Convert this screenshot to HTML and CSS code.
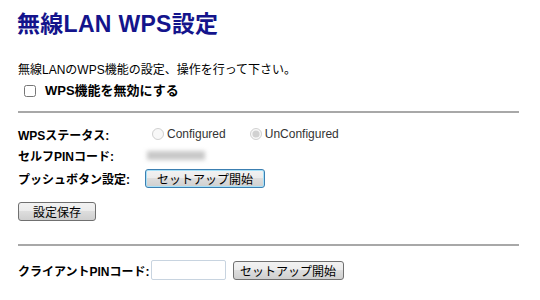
FILE: index.html
```html
<!DOCTYPE html>
<html lang="ja">

<head>
    <meta charset="UTF-8">
    <title>無線LAN WPS設定</title>
    <link rel="stylesheet" href="styles.css">
</head>

<body>
    <div class="page">
        <h1 class="title">無線LAN WPS設定</h1>
        <p class="desc">無線LANのWPS機能の設定、操作を行って下さい。</p>
        <label class="disable">
            <input type="checkbox" class="check">
            <span>WPS機能を無効にする</span>
        </label>
        <hr class="rule">
        <div class="form">
            <div class="row">
                <span class="label">WPSステータス:</span>
                <label class="radio"><input type="radio" name="status" disabled>Configured</label>
                <label class="radio"><input type="radio" name="status" checked disabled>UnConfigured</label>
            </div>
            <div class="row row-pin">
                <span class="label">セルフPINコード:</span>
                <span class="pin"></span>
            </div>
            <div class="row row-push">
                <span class="label">プッシュボタン設定:</span>
                <button class="btn btn-focus">セットアップ開始</button>
            </div>
        </div>
        <button class="btn btn-save">設定保存</button>
        <hr class="rule rule-bottom">
        <div class="row row-client">
            <span class="label">クライアントPINコード:</span>
            <input type="text" class="pin-input">
            <button class="btn btn-client">セットアップ開始</button>
        </div>
    </div>
</body>

</html>
```

FILE: styles.css
```css
* {
    padding: 0;
    margin: 0;
    box-sizing: border-box;
}

html,
body {
    width: 100%;
    height: 100%;
    background: #fff;
}

body {
    font-family: "Liberation Sans", "Noto Sans CJK JP", sans-serif;
    font-size: 12px;
    color: #000;
}

.page {
    padding: 9px 21px 0 17px;
}

.title {
    font-size: 23px;
    line-height: 30px;
    font-weight: bold;
    color: #14148c;
    letter-spacing: 0.3px;
}

.desc {
    margin-top: 23px;
    margin-left: 1px;
    line-height: 16px;
}

.disable {
    display: flex;
    align-items: center;
    margin: 4px 0 0 7px;
    font-weight: bold;
    font-size: 13px;
    line-height: 18px;
}

.check {
    width: 12px;
    height: 12px;
    margin: 0 9px 0 0;
}

.rule {
    border: 0;
    border-top: 2px solid #a8a8a8;
    margin: 11px 0 0 1px;
}

.form {
    margin-top: 11px;
    margin-left: 1px;
}

.row {
    display: flex;
    align-items: center;
    height: 20px;
    white-space: nowrap;
}

.label {
    font-weight: bold;
    width: 127px;
}

.radio {
    display: flex;
    align-items: center;
    color: #333;
    margin-right: 17px;
}

.radio input {
    width: 12px;
    height: 12px;
    margin: 0 3px 0 7px;
}

.row-pin {
    margin-top: 1px;
}

.pin {
    width: 58px;
    height: 9px;
    background: #c8c8c8;
    filter: blur(2px);
    margin-left: 2px;
}

.row-push {
    margin-top: 3px;
}

.btn {
    font-family: inherit;
    font-size: 12px;
    height: 19px;
    padding: 0 4px;
    white-space: nowrap;
    border: 1px solid #707070;
    border-radius: 3px;
    background: linear-gradient(#f2f2f2, #ebebeb 50%, #dddddd 50%, #cfcfcf);
    color: #000;
}

.btn-focus {
    width: 120px;
    border-color: #3c7fb1;
    box-shadow: inset 0 0 0 1px #a6e1f9;
}

.btn-save {
    width: 78px;
    margin: 14px 0 0 1px;
}

.rule-bottom {
    margin-top: 23px;
}

.row-client {
    margin: 14px 0 0 1px;
}

.row-client .label {
    width: auto;
    margin-right: 0;
}

.pin-input {
    width: 75px;
    height: 20px;
    margin-left: 1px;
    border: 1px solid #c8d4e0;
    border-radius: 2px;
}

.btn-client {
    width: 111px;
    margin-left: 7px;
}
```
